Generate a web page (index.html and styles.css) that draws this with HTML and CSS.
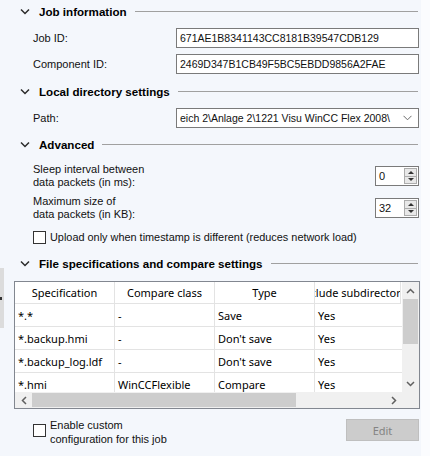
FILE: index.html
```html
<!DOCTYPE html>
<html>
<head>
<meta charset="utf-8">
<link rel="stylesheet" href="styles.css">
</head>
<body>
<div class="page">
  <div class="panel">
    <div class="sec">
      <svg class="chev" width="10" height="7" viewBox="0 0 10 7"><path d="M1 1.5 L5 5.5 L9 1.5" fill="none" stroke="#2b2b2b" stroke-width="1.5"/></svg>
      <span class="t">Job information</span><span class="ln"></span>
    </div>
    <div class="field"><span class="lbl">Job ID:</span><div class="input">671AE1B8341143CC8181B39547CDB129</div></div>
    <div class="field"><span class="lbl">Component ID:</span><div class="input">2469D347B1CB49F5BC5EBDD9856A2FAE</div></div>

    <div class="sec s2">
      <svg class="chev" width="10" height="7" viewBox="0 0 10 7"><path d="M1 1.5 L5 5.5 L9 1.5" fill="none" stroke="#2b2b2b" stroke-width="1.5"/></svg>
      <span class="t">Local directory settings</span><span class="ln"></span>
    </div>
    <div class="field"><span class="lbl">Path:</span><div class="input combo"><span class="ctext">eich 2\Anlage 2\1221 Visu WinCC Flex 2008\</span><svg class="cdrop" width="9" height="6" viewBox="0 0 9 6"><path d="M0.5 0.8 L4.5 4.8 L8.5 0.8" fill="none" stroke="#6a6a6a" stroke-width="1"/></svg></div></div>

    <div class="sec s3">
      <svg class="chev" width="10" height="7" viewBox="0 0 10 7"><path d="M1 1.5 L5 5.5 L9 1.5" fill="none" stroke="#2b2b2b" stroke-width="1.5"/></svg>
      <span class="t">Advanced</span><span class="ln"></span>
    </div>
    <div class="numrow first">
      <span class="lbl2">Sleep interval between<br>data packets (in ms):</span>
      <div class="spin"><span class="sval">0</span><div class="sbtn"><span class="up"></span><span class="dn"></span></div></div>
    </div>
    <div class="numrow second">
      <span class="lbl2">Maximum size of<br>data packets (in KB):</span>
      <div class="spin"><span class="sval">32</span><div class="sbtn"><span class="up"></span><span class="dn"></span></div></div>
    </div>
    <div class="chkrow"><span class="box"></span><span>Upload only when timestamp is different (reduces network load)</span></div>

    <div class="sec s4">
      <svg class="chev" width="10" height="7" viewBox="0 0 10 7"><path d="M1 1.5 L5 5.5 L9 1.5" fill="none" stroke="#2b2b2b" stroke-width="1.5"/></svg>
      <span class="t">File specifications and compare settings</span><span class="ln"></span>
    </div>
    <div class="tbl">
      <div class="data">
        <div class="tr th"><div class="c">Specification</div><div class="c">Compare class</div><div class="c">Type</div><div class="c">Include subdirectories</div></div>
        <div class="tr"><div class="c">*.*</div><div class="c">-</div><div class="c">Save</div><div class="c">Yes</div></div>
        <div class="tr"><div class="c">*.backup.hmi</div><div class="c">-</div><div class="c">Don't save</div><div class="c">Yes</div></div>
        <div class="tr"><div class="c">*.backup_log.ldf</div><div class="c">-</div><div class="c">Don't save</div><div class="c">Yes</div></div>
        <div class="tr"><div class="c">*.hmi</div><div class="c">WinCCFlexible</div><div class="c">Compare</div><div class="c">Yes</div></div>
      </div>
      <div class="vs">
        <div class="arr"><svg width="9" height="6" viewBox="0 0 9 6"><path d="M1 5 L4.5 1.5 L8 5" fill="none" stroke="#606060" stroke-width="1.5"/></svg></div>
        <div class="vthumb"></div>
        <div class="vtrack"></div>
        <div class="arr"><svg width="9" height="6" viewBox="0 0 9 6"><path d="M1 1 L4.5 4.5 L8 1" fill="none" stroke="#606060" stroke-width="1.5"/></svg></div>
      </div>
      <div class="hs">
        <div class="harr"><svg width="6" height="9" viewBox="0 0 6 9"><path d="M5 1 L1.5 4.5 L5 8" fill="none" stroke="#606060" stroke-width="1.5"/></svg></div>
        <div class="hthumb"></div>
        <div class="htrack"></div>
        <div class="harr"><svg width="6" height="9" viewBox="0 0 6 9"><path d="M1 1 L4.5 4.5 L1 8" fill="none" stroke="#606060" stroke-width="1.5"/></svg></div>
      </div>
      <div class="corner"></div>
    </div>
    <div class="bottom">
      <span class="box"></span>
      <span class="blbl">Enable custom<br>configuration for this job</span>
      <button class="btn">Edit</button>
    </div>
  </div>
  <div class="strip"></div>
  <div class="grip"><span class="gdot"></span></div>
</div>
</body>
</html>
```

FILE: styles.css
```css
* { box-sizing: border-box; }
body {
  margin: 0;
  background: #f4f7fc;
  font-family: "Liberation Sans", Arial, sans-serif;
  font-size: 11px;
  color: #111;
}
.page {
  display: flex;
  width: 430px;
  height: 456px;
  position: relative;
  overflow: hidden;
}
.panel {
  width: 421px;
  padding-right: 2px;
}
.strip {
  flex: 1;
  background: #fbfcfe;
}
.sec {
  display: flex;
  align-items: center;
  height: 22px;
  padding-left: 20px;
  padding-right: 1px;
}
.sec .chev { flex: none; }
.sec .t {
  font-weight: bold;
  font-size: 11.6px;
  margin-left: 9px;
  color: #000;
}
.sec .ln {
  flex: 1;
  height: 1px;
  background: #a0a0a0;
  margin-left: 8px;
}
.s2 { margin-top: 6px; }
.s3 { margin-top: 5px; }
.s4 { margin-top: 7px; }
.field {
  display: flex;
  align-items: center;
  height: 20px;
  margin-top: 6px;
  padding-left: 33px;
}
.lbl { width: 143px; flex: none; }
.input {
  width: 243px;
  height: 20px;
  border: 1px solid #7a7a7a;
  background: #fff;
  padding-left: 3px;
  display: flex;
  align-items: center;
  white-space: nowrap;
  overflow: hidden;
  font-size: 10.5px;
}
.combo { padding-right: 6px; }
.ctext { flex: 1; overflow: hidden; }
.cdrop { flex: none; margin-left: 4px; }
.numrow {
  display: flex;
  align-items: center;
  height: 26px;
  padding-left: 33px;
}
.numrow.first { margin-top: 8px; }
.numrow.second { margin-top: 6px; }
.lbl2 { line-height: 13px; }
.spin {
  margin-left: auto;
  width: 44px;
  height: 20px;
  border: 1px solid #7a7a7a;
  background: #fff;
  display: flex;
  align-items: center;
  padding: 1px 1px 1px 3px;
}
.sval { flex: 1; }
.sbtn {
  width: 13px;
  height: 16px;
  border: 1px solid #acacac;
  background: #e8e8e8;
  display: flex;
  flex-direction: column;
}
.sbtn .up, .sbtn .dn {
  flex: 1;
  display: flex;
  align-items: center;
  justify-content: center;
}
.sbtn .up { border-bottom: 1px solid #acacac; }
.sbtn .up::after {
  content: "";
  border-left: 3px solid transparent;
  border-right: 3px solid transparent;
  border-bottom: 3px solid #333;
}
.sbtn .dn::after {
  content: "";
  border-left: 3px solid transparent;
  border-right: 3px solid transparent;
  border-top: 3px solid #333;
}
.chkrow {
  display: flex;
  align-items: center;
  height: 16px;
  margin-top: 8px;
  padding-left: 33px;
  font-size: 10.9px;
}
.box {
  width: 13px;
  height: 13px;
  border: 1px solid #333;
  background: #fff;
  flex: none;
  margin-right: 4px;
}
.tbl {
  margin: 7px 0 0 14px;
  width: 406px;
  height: 128px;
  border: 1px solid #828790;
  background: #fff;
  display: grid;
  grid-template-columns: 387px 17px;
  grid-template-rows: 110px 16px;
  font-family: "Noto Sans", sans-serif;
  font-size: 11px;
  color: #000;
}
.data { overflow: hidden; }
.tr {
  display: grid;
  grid-template-columns: 100px 100px 100px 100px;
  height: 23px;
}
.tr.th { height: 22px; }
.c {
  border-right: 1px solid #e3e3e3;
  border-bottom: 1px solid #e3e3e3;
  padding-left: 3px;
  display: flex;
  align-items: center;
  white-space: nowrap;
  overflow: hidden;
}
.th .c { justify-content: center; padding-left: 0; }
.th .c:last-child { width: 86px; }
.vs {
  background: #f0f0f0;
  display: flex;
  flex-direction: column;
}
.arr {
  height: 17px;
  display: flex;
  align-items: center;
  justify-content: center;
  flex: none;
}
.vthumb {
  height: 45px;
  margin: 0 1px;
  background: #cdcdcd;
  flex: none;
}
.vtrack { flex: 1; }
.hs {
  background: #f0f0f0;
  display: flex;
}
.harr {
  width: 17px;
  display: flex;
  align-items: center;
  justify-content: center;
  flex: none;
}
.hthumb {
  width: 264px;
  margin: 1px 0;
  background: #cdcdcd;
  flex: none;
}
.htrack { flex: 1; }
.corner { background: #f0f0f0; }
.bottom {
  display: flex;
  align-items: center;
  height: 22px;
  margin-top: 10px;
  padding-left: 33px;
}
.blbl { line-height: 14px; padding-top: 3px; }
.btn {
  margin-left: auto;
  width: 73px;
  height: 22px;
  background: #cccccc;
  border: 1px solid #bfbfbf;
  color: #838383;
  font-family: "Noto Sans", sans-serif;
  font-size: 11px;
  padding: 0;
}
.grip {
  position: absolute;
  left: 0;
  top: 268px;
  width: 4px;
  height: 60px;
  background: #dcdcdc;
}
.gdot {
  position: absolute;
  left: 0;
  top: 29px;
  width: 2px;
  height: 3px;
  background: #333;
}
```
